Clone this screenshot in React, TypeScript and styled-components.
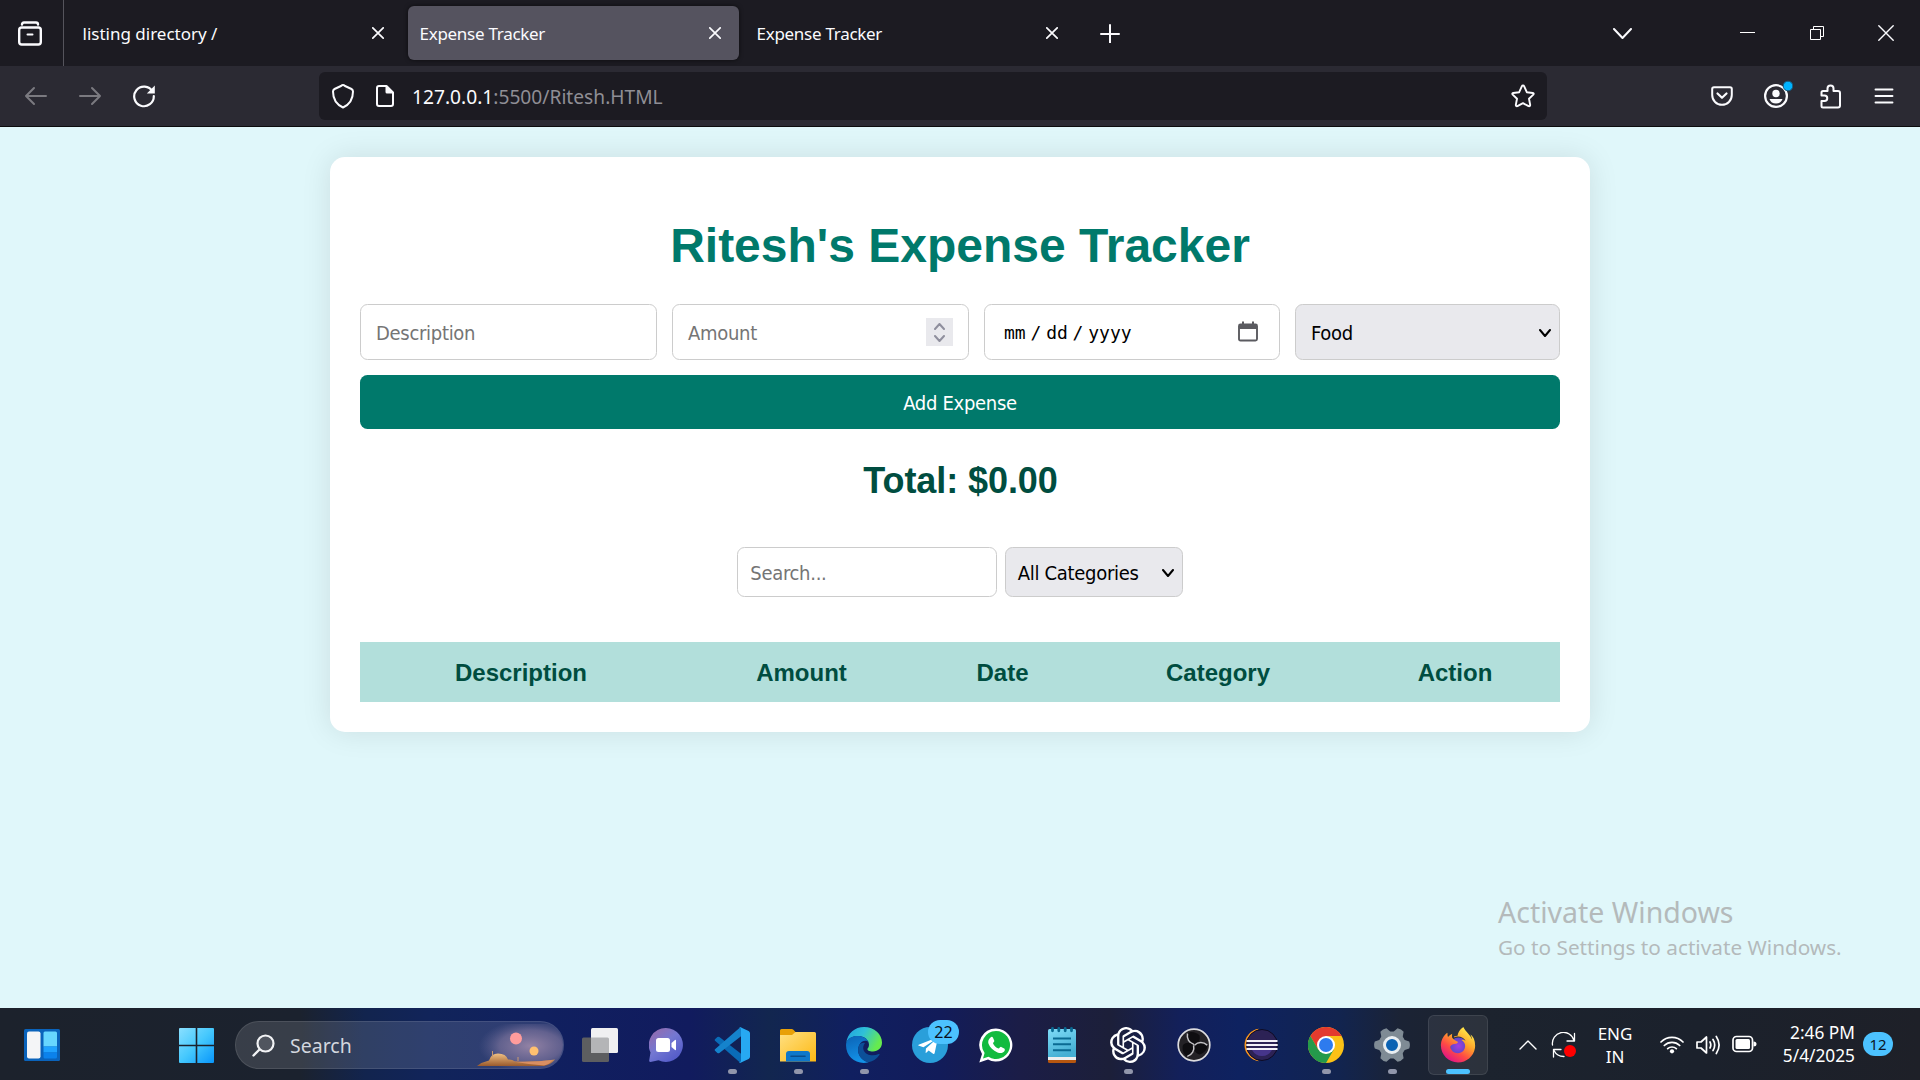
import React from 'react';
import styled, { createGlobalStyle, css } from 'styled-components';
import { SiOpenai } from 'react-icons/si';
import { FaTelegramPlane, FaFirefoxBrowser } from 'react-icons/fa';

const ui = '"Noto Sans", "Open Sans", sans-serif';
const control = '"DejaVu Sans Condensed", "DejaVu Sans", sans-serif';

const Global = createGlobalStyle`
  * { box-sizing: border-box; }
  body { margin: 0; background: #e0f7fa; font-family: "Liberation Sans", Arial, sans-serif; overflow: hidden; }
  svg { display: block; flex: none; }
`;

const Screen = styled.div`
  display: flex;
  flex-direction: column;
  width: 1920px;
  height: 1080px;
  position: relative;
`;

/* ---------- browser chrome ---------- */
const TabBar = styled.header`
  display: flex;
  align-items: center;
  height: 66px;
  background: #1c1b22;
  color: #fbfbfe;
  font-family: ${ui};
`;
const ViewButton = styled.div`
  display: flex;
  align-items: center;
  justify-content: center;
  width: 64px;
  height: 66px;
  padding-right: 4px;
  border-right: 1px solid #55545c;
`;
const Tabs = styled.div`
  display: flex;
  gap: 6px;
  margin-left: 7px;
`;
const Tab = styled.div<{ $active?: boolean }>`
  display: flex;
  align-items: center;
  justify-content: space-between;
  width: 331px;
  height: 54px;
  padding: 0 18px 0 11.5px;
  border-radius: 6px;
  ${p => p.$active && css`
    background: #55535f;
    box-shadow: 0 0 4px rgba(0, 0, 0, 0.6);
  `}
`;
const TabTitle = styled.span<{ $tracking: number }>`
  padding-top: 2px;
  font-size: 17px;
  line-height: 24px;
  letter-spacing: ${p => p.$tracking}px;
  white-space: nowrap;
`;
const NewTab = styled.div`
  margin-left: 24px;
`;
const TabMenu = styled.div`
  margin-left: auto;
  width: 100px;
`;
const WindowButtons = styled.div`
  display: flex;
  width: 207px;
`;
const WindowButton = styled.div`
  display: flex;
  align-items: center;
  justify-content: center;
  width: 69px;
  height: 66px;
`;
const NavBar = styled.nav`
  display: flex;
  align-items: center;
  height: 61px;
  padding: 0 9px;
  background: #2b2a33;
  border-bottom: 1px solid #0c0c0d;
  color: #fbfbfe;
`;
const NavButton = styled.div<{ $disabled?: boolean }>`
  display: flex;
  align-items: center;
  justify-content: center;
  width: 54px;
  height: 60px;
  color: ${p => (p.$disabled ? '#7b7a80' : '#fbfbfe')};
`;
const UrlBar = styled.div`
  display: flex;
  align-items: center;
  width: 1228px;
  height: 48px;
  margin: 0 auto 0 148px;
  padding: 0 12px 0 12px;
  gap: 18px;
  border-radius: 6px;
  background: #1c1b22;
`;
const Url = styled.span`
  flex: 1;
  margin-left: -3px;
  padding-top: 2px;
  font: 19.2px/26px ${ui};
  color: #8f8e95;
  b { font-weight: 400; color: #fbfbfe; }
`;

/* ---------- page ---------- */
const Page = styled.main`
  flex: 1;
  padding-top: 30px;
  background: #e0f7fa;
`;
const Card = styled.section`
  width: 1260px;
  margin: 0 auto;
  padding: 30px;
  display: flow-root;
  border-radius: 15px;
  background: #fff;
  box-shadow: 0 0 30px rgba(0, 0, 0, 0.1);
`;
const Title = styled.h1`
  margin: 31px 0 31px;
  font-size: 48px;
  line-height: 55px;
  text-align: center;
  color: #00796b;
`;
const Form = styled.div`
  display: grid;
  grid-template-columns: 297px 297px 296px 265px;
  gap: 15px;
`;
const field = css`
  border: 1px solid #ccc;
  border-radius: 7.5px;
  font: 20px/24px ${control};
  letter-spacing: -0.3px;
`;
const TextInput = styled.input<{ $compact?: boolean }>`
  ${field}
  width: ${p => (p.$compact ? '260px' : '100%')};
  height: ${p => (p.$compact ? '50px' : '56px')};
  padding: ${p => (p.$compact ? '2px 12px 0' : '1px 15px 0')};
  background: #fff;
  outline: none;
  &::placeholder { color: #757575; opacity: 1; }
`;
const InputBox = styled.div`
  ${field}
  display: flex;
  align-items: center;
  justify-content: space-between;
  height: 56px;
  padding: 0 15px 0 15px;
`;
const Placeholder = styled.span`
  padding-top: 1px;
  color: #757575;
`;
const Spinner = styled.div`
  display: flex;
  flex-direction: column;
  align-items: center;
  justify-content: space-between;
  width: 27px;
  height: 28px;
  padding: 5px 0 4px;
  background: #e9e9ed;
  color: #8f8f9d;
`;
const DateParts = styled.span`
  display: flex;
  gap: 4.8px;
  padding: 1px 0 0 4px;
  font: 18px/24px "DejaVu Sans Mono", monospace;
  letter-spacing: 0;
  color: #000;
`;
const CalendarSlot = styled.span`
  padding: 0 6px 2px 0;
`;
const Select = styled.div<{ $compact?: boolean }>`
  ${field}
  display: flex;
  align-items: center;
  justify-content: space-between;
  width: ${p => (p.$compact ? '178px' : '100%')};
  height: ${p => (p.$compact ? '50px' : '56px')};
  padding: ${p => (p.$compact ? '1px 8px 0 12px' : '1px 8px 0 15px')};
  background: #e9e9ed;
  color: #000;
`;
const AddButton = styled.button`
  grid-column: 1 / -1;
  height: 54px;
  padding: 2px 0 0;
  border: 0;
  border-radius: 7.5px;
  background: #00796b;
  color: #fff;
  font: 20px/24px ${control};
  letter-spacing: -0.3px;
`;
const Total = styled.h2`
  margin: 31px 0 46px;
  padding-left: 1px;
  font-size: 36px;
  line-height: 41px;
  letter-spacing: -0.08px;
  text-align: center;
  color: #004d40;
`;
const Filters = styled.div`
  display: flex;
  justify-content: center;
  gap: 7.5px;
  margin-bottom: 45px;
`;
const HeadRow = styled.div`
  display: grid;
  grid-template-columns: 322px 239px 163px 268px 206px;
  align-items: center;
  height: 60px;
  padding-top: 2px;
  background: #b2dfdb;
`;
const HeadCell = styled.div`
  font-size: 24px;
  font-weight: bold;
  text-align: center;
  color: #004d40;
`;
const Watermark = styled.aside`
  position: absolute;
  left: 1498px;
  top: 892px;
  color: #b4babb;
  font-family: ${ui};
  white-space: nowrap;
`;
const WatermarkTitle = styled.div`
  font-size: 28.5px;
  line-height: 40px;
`;
const WatermarkText = styled.div`
  font-size: 20.75px;
  line-height: 31px;
`;

/* ---------- taskbar ---------- */
const Taskbar = styled.footer`
  display: flex;
  align-items: center;
  height: 72px;
  background: linear-gradient(90deg, #1c222c 0, #1b222e 300px, #12244e 365px, #11245a 430px, #10205f 540px, #111b5e 690px,
    #12264f 770px, #101f60 850px, #121c5a 940px, #1b1d47 1020px, #1c1f39 1110px, #13205a 1180px, #0e2260 1240px,
    #12244f 1340px, #1b2335 1400px, #1c232e 1480px, #1b212c 1700px, #1e2028 1920px);
  color: #fff;
  font-family: ${ui};
`;
const Widgets = styled.div`
  padding-top: 1px;
  margin-left: 24px;
`;
const Start = styled.div`
  padding-top: 2px;
  margin-left: 119px;
`;
const SearchBox = styled.div`
  display: flex;
  align-items: center;
  width: 329px;
  height: 48px;
  margin: 2px 3px 0 21px;
  padding-left: 16px;
  border: 1px solid rgba(255, 255, 255, 0.1);
  border-radius: 24px;
  background: rgba(255, 255, 255, 0.13);
  overflow: hidden;
`;
const SearchText = styled.span`
  flex: 1;
  margin-left: 15px;
  padding-top: 1px;
  font-size: 19.5px;
  line-height: 26px;
  color: #d3d7df;
`;
const Apps = styled.div`
  display: flex;
`;
const AppButton = styled.div`
  position: relative;
  display: flex;
  align-items: center;
  justify-content: center;
  width: 66px;
  height: 72px;
  padding-top: 2px;
`;
const Tile = styled.div`
  display: flex;
  align-items: center;
  justify-content: center;
  width: 60px;
  height: 60px;
  border: 1px solid rgba(255, 255, 255, 0.09);
  border-radius: 6px;
  background: rgba(255, 255, 255, 0.07);
`;
const Indicator = styled.i<{ $current?: boolean }>`
  position: absolute;
  bottom: 6px;
  width: ${p => (p.$current ? 24 : 9)}px;
  height: 5px;
  border-radius: 3px;
  background: ${p => (p.$current ? '#4cc2ff' : '#9196ab')};
`;
const Count = styled.span`
  position: absolute;
  left: 31px;
  top: 12px;
  width: 31px;
  height: 24px;
  border-radius: 12px;
  background: #4cc2ff;
  color: #0a1020;
  font-size: 16px;
  line-height: 24px;
  text-align: center;
`;
const Tray = styled.div`
  display: flex;
  align-items: center;
  flex: 1;
  padding: 2px 27px 0 28px;
`;
const Language = styled.div`
  width: 60px;
  margin-left: 8px;
  font-size: 17px;
  line-height: 23px;
  text-align: center;
`;
const Status = styled.div`
  display: flex;
  gap: 11.5px;
  margin-left: 15px;
`;
const Clock = styled.div`
  margin: 0 0 2px auto;
  font-size: 17.3px;
  line-height: 23px;
  text-align: right;
`;
const Bell = styled.div`
  width: 30px;
  height: 24px;
  margin: 0 0 2px 8px;
  border-radius: 12px;
  background: #4cc2ff;
  color: #0a1626;
  font-size: 15px;
  line-height: 24px;
  text-align: center;
`;
const SyncSlot = styled.div`
  margin-left: 14px;
`;

/* ---------- small drawings ---------- */
const line = { fill: 'none', stroke: 'currentColor', strokeWidth: 2, strokeLinecap: 'round', strokeLinejoin: 'round' } as const;

const Cross = ({ s = 12, w = 1.7 }: { s?: number; w?: number }) => (
  <svg width={s} height={s} viewBox={`0 0 ${s} ${s}`}>
    <path d={`M.8 .8L${s - 0.8} ${s - 0.8}M${s - 0.8} .8L.8 ${s - 0.8}`} {...line} strokeWidth={w} />
  </svg>
);
const Chevron = ({ w, h, up, t = 2 }: { w: number; h: number; up?: boolean; t?: number }) => (
  <svg width={w} height={h} viewBox={`0 0 ${w} ${h}`}>
    <path d={up ? `M1 ${h - 1}L${w / 2} 1L${w - 1} ${h - 1}` : `M1 1L${w / 2} ${h - 1}L${w - 1} 1`} {...line} strokeWidth={t} />
  </svg>
);
const Arrow = ({ back }: { back?: boolean }) => (
  <svg width="24" height="24" viewBox="0 0 24 24">
    <path d={back ? 'M22 12H2M10 4L2 12l8 8' : 'M2 12h20M14 4l8 8-8 8'} {...line} />
  </svg>
);

const VsCode = () => (
  <svg width="36" height="36" viewBox="0 0 36 36">
    <path d="M1 12.2l2.4-2.2q1-.6 2 0L28 27.5V35L26 35.6 1 13.8q-.8-.8 0-1.6z" fill="#0a6cb8" />
    <path d="M1 23.8L3.4 26q1 .6 2 0L28 8.5V1L26 .4 1 22.2q-.8.8 0 1.6z" fill="#1583cc" />
    <path d="M26.5.3L34.6 4Q36 4.800 36 6.200V29.800q0 1.400-1.400 2.200L26.500 35.700q-.8.2-1.500-.5.900.4 2-1V1.800q-.4-1.400-2-1 .7-.7 1.500-.5z" fill="#27a9f2" />
  </svg>
);
const Folder = () => (
  <svg width="36" height="34" viewBox="0 0 36 34">
    <defs><linearGradient id="fold" x2="1" y2="1"><stop stopColor="#ffe083" /><stop offset="1" stopColor="#fdb913" /></linearGradient></defs>
    <path d="M0 2.500Q0 1 1.500 1h10.200q1 0 1.700.8L16 4.500 12 9H0z" fill="#e8a008" />
    <path d="M0 7h12l3.500-3H34.500Q36 4 36 5.500V33.500H0z" fill="url(#fold)" />
    <path d="M6 33.500V26q0-3 3-3H27q3 0 3 3v7.500z" fill="#0f78ca" />
    <path d="M11 28.300h14" stroke="#0a4e8c" strokeWidth="1.600" strokeLinecap="round" />
  </svg>
);
const Edge = () => (
  <svg width="36" height="36" viewBox="0 0 36 36">
    <defs>
      <linearGradient id="eg" x2="1" y2=".4"><stop stopColor="#1f9fe0" /><stop offset=".5" stopColor="#2fc0d8" /><stop offset="1" stopColor="#66eb4e" /></linearGradient>
      <linearGradient id="eb" x2=".3" y2="1"><stop stopColor="#0b62b5" /><stop offset="1" stopColor="#1391e6" /></linearGradient>
    </defs>
    <path d="M.2 16C1.500 6 9 0 18 0c10.500 0 18 7.500 18 15.500 0 5.500-4 9-9 9-4 0-6-1.500-5.500-2.800.3-.7 1.500-1.500 1.500-4C23 13 18.500 9 12 9 6 9 1.500 12 .2 16z" fill="url(#eg)" />
    <path d="M.2 16C1.500 11 6 9 11.500 9c5.500 0 9.500 2.500 11 6-2-1.800-7-2-9.500 3.500C10 26 15 33.500 22.500 35.300 10 38.500-1.500 29 .2 16z" fill="url(#eb)" />
    <path d="M13 18.500c-3 7 1.500 15.500 9.500 16.800 4.500-.8 8.500-3.500 11-7.500.4-.7-.2-1-.8-.7-6 2.700-13 .9-15-3.600-1-2.500-.4-5.500 1.300-7.500-2.500-.5-5 .5-6 2.500z" fill="#0c4f98" />
  </svg>
);
const Chrome = () => (
  <svg width="36" height="36" viewBox="0 0 36 36">
    <circle cx="18" cy="18" r="18" fill="#fbc116" />
    <path d="M2.400 9A18 18 0 0 1 33.600 9H18L10.200 22.500z" fill="#e33b2e" />
    <path d="M2.400 9A18 18 0 0 0 18 36L25.800 22.500 18 27 10.200 22.500z" fill="#249a4b" />
    <circle cx="18" cy="18" r="9" fill="#fff" />
    <circle cx="18" cy="18" r="7" fill="#2d7bee" />
  </svg>
);
const Gear = () => (
  <svg width="36" height="36" viewBox="0 0 36 36">
    <g fill="#7f8b95">
      <circle cx="18" cy="18" r="13.500" />
      {[30, 90, 150, 210, 270, 330].map(a => (
        <path key={a} d="M12 8L14.500 .8Q18-.6 21.500 .8L24 8z" transform={`rotate(${a} 18 18)`} />
      ))}
    </g>
    <circle cx="18" cy="18" r="7.500" fill="#0b62b3" stroke="#e9eef2" strokeWidth="3" />
  </svg>
);
const Obs = () => (
  <svg width="34" height="34" viewBox="0 0 34 34">
    <circle cx="17" cy="17" r="15.800" fill="#242226" stroke="#dcdcdf" strokeWidth="1.700" />
    {[0, 120, 240].map(a => (
      <g key={a} transform={`rotate(${a} 17 17)`}>
        <path d="M11 5c-2.500 6 .5 10.500 6 11.500 5-1.500 6.500-5 5.500-9C20 4.500 14 3 11 5z" fill="#0e0d10" />
        <path d="M10.500 5.500C9.500 10.500 12 15 17 16.500" fill="none" stroke="#c4c3c6" strokeWidth="1.500" />
      </g>
    ))}
  </svg>
);
const Eclipse = () => (
  <svg width="36" height="34" viewBox="0 0 36 34">
    <path d="M17 .8A16.500 16.500 0 0 0 17 33.200 17 17 0 0 1 17 .8z" fill="#f7941e" />
    <path d="M17 .8A16.300 16.300 0 0 0 17 33.200L12 29Q5 24 5 17T12 5z" fill="#f7941e" />
    <circle cx="20" cy="17" r="15.500" fill="#2c2255" stroke="#0d0b24" strokeWidth="1" />
    <path d="M10 22H30Q26.500 28 20 28T10 22z" fill="#46358a" />
    <path d="M4.500 13H35.500M4.300 17H35.700M4.500 21H35.500" stroke="#f2f0f7" strokeWidth="2.200" />
  </svg>
);
const Notepad = () => (
  <svg width="28" height="36" viewBox="0 0 28 36">
    <defs><linearGradient id="np" x2=".4" y2="1"><stop stopColor="#7fdcf8" /><stop offset="1" stopColor="#45afd3" /></linearGradient></defs>
    <path d="M0 31h28v3.500q0 1.500-1.500 1.500h-25Q0 36 0 34.500z" fill="#b6560f" />
    <path d="M0 29h28v4H0z" fill="#eee" />
    <path d="M0 3.500Q0 2 1.500 2h25Q28 2 28 3.500V30H0z" fill="url(#np)" />
    <path d="M5 11.500H23M5 17.300H23M5 23.200H23" stroke="#0a6a92" strokeWidth="1.900" />
    <path d="M4.500 1.500v2.300M10.800 1.500v2.300M17.200 1.500v2.300M23.500 1.500v2.300" stroke="#0a6a92" strokeWidth="2.800" strokeLinecap="round" />
  </svg>
);
const Chat = () => (
  <svg width="34" height="34" viewBox="0 0 34 34">
    <defs><linearGradient id="ch" x1="0" x2=".8" y1="0" y2="1"><stop stopColor="#9a68a5" /><stop offset=".5" stopColor="#7478d2" /><stop offset="1" stopColor="#5058c8" /></linearGradient></defs>
    <path d="M17 0a17 17 0 1 1-7.500 32.300L1.500 34Q0 34 .2 32.500L1.500 24.500A17 17 0 0 1 17 0z" fill="url(#ch)" />
    <rect x="7" y="10" width="14" height="14" rx="2.500" fill="#fff" />
    <path d="M22.500 15l3.500-3q1-.5 1 .6V21.400q0 1.100-1 .6l-3.500-3z" fill="#fff" />
  </svg>
);
const TaskView = () => (
  <svg width="36" height="34" viewBox="0 0 36 34">
    <rect x="0" y="9.500" width="27" height="24.500" rx="1.500" fill="#5d5e60" />
    <rect x="9" y="0" width="27" height="25" rx="1.500" fill="#f0f0f1" />
    <path d="M9 9.500h16.500q1.500 0 1.500 1.500V25H10.500Q9 25 9 23.500z" fill="#b4b5b7" />
  </svg>
);
const Telegram = () => (
  <svg width="36" height="36" viewBox="0 0 36 36">
    <circle cx="18" cy="18" r="18" fill="#2a9fda" />
    <g transform="translate(5 8)"><FaTelegramPlane size={22} color="#fff" /></g>
  </svg>
);
const WhatsApp = () => (
  <svg width="34" height="35" viewBox="0 0 34 35">
    <path d="M17 .5A16.500 16.500 0 1 1 9 31.500L.3 34.500 3 26A16.500 16.500 0 0 1 17 .5z" fill="#fff" />
    <path d="M17 3A14 14 0 1 1 9.500 28.800L4 30.500 5.600 25A14 14 0 0 1 17 3z" fill="#12bb3f" />
    <path d="M11.500 9.500c1-1 2-.8 2.500.2l1.300 3c.3.800-1.500 2-1.300 2.600 1 2.500 3 4.300 5.500 5.300.7.200 1.800-2 2.700-1.700l3 1.500c1 .5.800 2.300-.3 3.300-1.800 1.700-4 1.600-6.400.7-4.500-1.800-7.500-5-9-8.700-.7-2-.2-4.500 2-6.200z" fill="#fff" />
  </svg>
);
const FirefoxMark = styled(FaFirefoxBrowser)`
  fill: url(#ff);
`;
const Firefox = () => (
  <svg width="36" height="36" viewBox="0 0 36 36">
    <defs>
      <linearGradient id="ff" x1=".85" y1=".05" x2=".25" y2=".95"><stop stopColor="#fff44f" /><stop offset=".4" stopColor="#ffa42a" /><stop offset=".7" stopColor="#ff4a45" /><stop offset="1" stopColor="#e01585" /></linearGradient>
      <radialGradient id="fp"><stop stopColor="#a63ce0" /><stop offset="1" stopColor="#5b49c8" /></radialGradient>
    </defs>
    <circle cx="18.500" cy="19" r="8.500" fill="url(#fp)" />
    <FirefoxMark size={36} />
  </svg>
);
const WidgetIcon = () => (
  <svg width="36" height="32" viewBox="0 0 36 32">
    <rect width="36" height="32" rx="1.500" fill="#0a63bb" />
    <rect x="3" y="2.500" width="13.500" height="27" rx="2" fill="#f4f5f7" />
    <path d="M19.500 4q0-1.500 1.500-1.500H31.500q1.500 0 1.500 1.500V17.500H19.500z" fill="#67d6ff" />
    <path d="M19.500 17.500H33V23.500H19.500z" fill="#1fa2ff" />
    <path d="M19.500 23.500H33V28q0 1.500-1.500 1.500H21q-1.500 0-1.500-1.500z" fill="#0b82ec" />
  </svg>
);
const StartIcon = () => (
  <svg width="35" height="35" viewBox="0 0 35 35">
    <defs><linearGradient id="st" gradientUnits="userSpaceOnUse" x1="0" y1="0" x2="35" y2="35"><stop stopColor="#8ae0ff" /><stop offset=".5" stopColor="#45c8fd" /><stop offset="1" stopColor="#0896fb" /></linearGradient></defs>
    <path d="M1 0H16.700V16.700H0V1Q0 0 1 0zM18.300 0H34q1 0 1 1V16.700H18.300zM0 18.300H16.700V35H1q-1 0-1-1zM18.300 18.300H35V34q0 1-1 1H18.300z" fill="url(#st)" />
  </svg>
);
const DesertArt = () => (
  <svg width="86" height="46" viewBox="0 0 86 46">
    <defs>
      <radialGradient id="sky" cx=".62" cy=".5" r=".6"><stop stopColor="#a58fae" stopOpacity=".85" /><stop offset=".6" stopColor="#8d7fa5" stopOpacity=".55" /><stop offset="1" stopColor="#6a6a98" stopOpacity="0" /></radialGradient>
      <linearGradient id="sand" y2="1" x2="0"><stop stopColor="#f0c083" /><stop offset="1" stopColor="#9a5a2c" /></linearGradient>
    </defs>
    <rect x="0" y="2" width="86" height="44" fill="url(#sky)" />
    <circle cx="39" cy="16.500" r="6" fill="#ff9c9c" />
    <circle cx="57" cy="29" r="4.500" fill="#ffc070" />
    <path d="M0 44q5-4 12-5.500 2-7 9-7 8 0 10 6 4-.5 7 2 20 .8 40-2-4 5-11 6.500z" fill="url(#sand)" />
    <path d="M15.500 29v6M41 35v4" stroke="#c99a70" strokeWidth="1" />
    <path d="M36 39.500q20 1 40-1.500-4 4.500-9 5.500-15-1-31-4z" fill="#d98e62" />
  </svg>
);

const apps: { icon: React.ReactNode; open?: boolean; current?: boolean; count?: string }[] = [
  { icon: <TaskView /> },
  { icon: <Chat /> },
  { icon: <VsCode />, open: true },
  { icon: <Folder />, open: true },
  { icon: <Edge />, open: true },
  { icon: <Telegram />, count: '22' },
  { icon: <WhatsApp /> },
  { icon: <Notepad /> },
  { icon: <SiOpenai size={36} />, open: true },
  { icon: <Obs /> },
  { icon: <Eclipse /> },
  { icon: <Chrome />, open: true },
  { icon: <Gear />, open: true },
  { icon: <Firefox />, open: true, current: true },
];

const tabs = [
  { title: 'listing directory /', tracking: 0 },
  { title: 'Expense Tracker', tracking: -0.28, active: true },
  { title: 'Expense Tracker', tracking: -0.28 },
];

export default function App() {
  return (
    <Screen>
      <Global />
      <TabBar>
        <ViewButton>
          <svg width="24" height="25" viewBox="0 0 24 25">
            <path d="M4 3.500Q4 1.500 6 1.500H18q2 0 2 2" {...line} strokeWidth={2.400} />
            <rect x="1.200" y="6.500" width="21.600" height="17" rx="2.500" {...line} strokeWidth={2.400} />
            <path d="M9.500 13.500h5" {...line} />
          </svg>
        </ViewButton>
        <Tabs>
          {tabs.map((t, i) => (
            <Tab key={i} $active={t.active}>
              <TabTitle $tracking={t.tracking}>{t.title}</TabTitle>
              <Cross />
            </Tab>
          ))}
        </Tabs>
        <NewTab>
          <svg width="20" height="20" viewBox="0 0 20 20"><path d="M1 11H19M10 2v18" {...line} /></svg>
        </NewTab>
        <TabMenu><Chevron w={19} h={11} /></TabMenu>
        <WindowButtons>
          <WindowButton><svg width="16" height="2" viewBox="0 0 16 2"><path d="M0 0H15V1H0z" fill="#fff" /></svg></WindowButton>
          <WindowButton>
            <svg width="14" height="14" viewBox="0 0 14 14">
              <path d="M.5 3.500H10.500V13.500H.5zM3.500 3.500V.5H13.500V10.500H10.500" fill="none" stroke="#fff" />
            </svg>
          </WindowButton>
          <WindowButton><Cross s={16} w={1.400} /></WindowButton>
        </WindowButtons>
      </TabBar>
      <NavBar>
        <NavButton $disabled><Arrow back /></NavButton>
        <NavButton $disabled><Arrow /></NavButton>
        <NavButton>
          <svg width="24" height="24" viewBox="0 0 24 24">
            <path d="M20.500 7.500A9.800 9.800 0 1 0 21.800 12" {...line} strokeWidth={2.200} />
            <path d="M22.800 1.500V9.500H14.800z" fill="currentColor" />
          </svg>
        </NavButton>
        <UrlBar>
          <svg width="24" height="26" viewBox="0 0 24 26">
            <path d="M12 2Q13 2 14 3L20.500 6q1.500.8 1.500 2.500C22 16 18.500 21.500 12 24.500 5.500 21.500 2 16 2 8.500 2 6.800 3.500 6 3.500 6L10 3Q11 2 12 2z" {...line} />
          </svg>
          <svg width="24" height="24" viewBox="0 0 24 24">
            <path d="M13.500 2H6Q4 2 4 4V20q0 2 2 2H18q2 0 2-2V8.500z" {...line} />
            <path d="M12.500 1.500V8Q12.500 9.500 14 9.500h6.500z" fill="currentColor" />
          </svg>
          <Url><b>127.0.0.1</b>:5500/Ritesh.HTML</Url>
          <svg width="24" height="24" viewBox="0 0 24 24">
            <path d="M12 1.500q.8 0 1.200.9L15.800 8.200l6 .8q1.500.4.500 1.600L18 14.800l1.200 6.200q0 1.600-1.600 1.200L12 19.200 6.400 22.200q-1.600.4-1.600-1.200L6 14.800 1.700 10.600Q.7 9.400 2.200 9l6-.8L10.800 2.400q.4-.9 1.200-.9z" {...line} strokeWidth={1.900} />
          </svg>
        </UrlBar>
        <NavButton>
          <svg width="22" height="20" viewBox="0 0 22 20">
            <path d="M3 1.200H19q1.800 0 1.800 1.800V9A9.800 9.800 0 0 1 1.200 9V3q0-1.800 1.800-1.800z" {...line} />
            <path d="M6.500 7.500L11 11.800 15.500 7.500" {...line} strokeWidth={2.200} />
          </svg>
        </NavButton>
        <NavButton>
          <svg width="34" height="34" viewBox="0 0 34 34">
            <circle cx="17" cy="17" r="10.900" {...line} strokeWidth={2.200} />
            <circle cx="17" cy="14.500" r="3.700" fill="currentColor" />
            <path d="M10.500 20h13q-1.500 4.500-6.500 4.500T10.500 20z" fill="currentColor" />
            <circle cx="29" cy="7" r="4.800" fill="#00b3ff" stroke="#155b7f" strokeWidth="1" />
          </svg>
        </NavButton>
        <NavButton>
          <svg width="24" height="25" viewBox="-2 0 24 25">
            <path d="M3 7H7.500V4.500a3 3 0 0 1 6 0V7H18q2 0 2 2V21.500q0 2-2 2H3q-1.500 0-1.500-1.500V17H4.500a2.700 2.700 0 0 0 0-5.500H1.500V8.500Q1.500 7 3 7z" {...line} />
          </svg>
        </NavButton>
        <NavButton>
          <svg width="20" height="16" viewBox="0 0 20 16"><path d="M1.500 1.500h17M1.500 8h17M1.500 14.500h17" {...line} strokeWidth={1.900} /></svg>
        </NavButton>
      </NavBar>

      <Page>
        <Card>
          <Title>Ritesh's Expense Tracker</Title>
          <Form>
            <TextInput placeholder="Description" />
            <InputBox>
              <Placeholder>Amount</Placeholder>
              <Spinner><Chevron w={11} h={7} up /><Chevron w={11} h={7} /></Spinner>
            </InputBox>
            <InputBox>
              <DateParts><span>mm</span><span>/</span><span>dd</span><span>/</span><span>yyyy</span></DateParts>
              <CalendarSlot>
                <svg width="20" height="21" viewBox="0 0 20 21">
                  <path d="M2.500 3.500h15q1.500 0 1.500 1.500v13q0 1.500-1.500 1.500h-15Q1 19.500 1 18V5Q1 3.500 2.500 3.500z" fill="none" stroke="#5b5b60" strokeWidth="1.900" />
                  <path d="M1 3.500H19V8H1zM4 .5h2V4H4zM14 .5h2V4h-2z" fill="#5b5b60" />
                </svg>
              </CalendarSlot>
            </InputBox>
            <Select><span>Food</span><Chevron w={12} h={8} /></Select>
            <AddButton>Add Expense</AddButton>
          </Form>
          <Total>Total: $0.00</Total>
          <Filters>
            <TextInput $compact placeholder="Search..." />
            <Select $compact><span>All Categories</span><Chevron w={12} h={8} /></Select>
          </Filters>
          <HeadRow>
            {['Description', 'Amount', 'Date', 'Category', 'Action'].map(h => <HeadCell key={h}>{h}</HeadCell>)}
          </HeadRow>
        </Card>
      </Page>

      <Watermark>
        <WatermarkTitle>Activate Windows</WatermarkTitle>
        <WatermarkText>Go to Settings to activate Windows.</WatermarkText>
      </Watermark>

      <Taskbar>
        <Widgets><WidgetIcon /></Widgets>
        <Start><StartIcon /></Start>
        <SearchBox>
          <svg width="23" height="23" viewBox="0 0 23 23">
            <circle cx="13.500" cy="9.500" r="8" fill="rgba(255,255,255,.12)" stroke="#f2f3f5" strokeWidth="2.200" />
            <path d="M7.500 15.500L1.500 21.500" stroke="#f2f3f5" strokeWidth="2.400" strokeLinecap="round" />
          </svg>
          <SearchText>Search</SearchText>
          <DesertArt />
        </SearchBox>
        <Apps>
          {apps.map((a, i) => (
            <AppButton key={i}>
              {a.current ? <Tile>{a.icon}</Tile> : a.icon}
              {a.count && <Count>{a.count}</Count>}
              {a.open && <Indicator $current={a.current} />}
            </AppButton>
          ))}
        </Apps>
        <Tray>
          <Chevron w={18} h={10} up t={1.400} />
          <SyncSlot>
            <svg width="26" height="26" viewBox="0 0 26 26">
              <path d="M1.500 13A11 11 0 0 1 23 8.500M23.500 1.500v7.500h-7.500M13 24.500A11 11 0 0 1 3 18.500M2.500 25V17.500h7.500" {...line} strokeWidth={1.300} />
              <circle cx="19" cy="19" r="6" fill="#f00" />
            </svg>
          </SyncSlot>
          <Language>ENG<br />IN</Language>
          <Status>
            <svg width="24" height="19" viewBox="0 0 24 19">
              <path d="M1 7A15.500 15.500 0 0 1 23 7M4.300 10.500a11 11 0 0 1 15.400 0M7.700 13.700a6.300 6.300 0 0 1 8.600 0" {...line} strokeWidth={1.700} />
              <circle cx="12" cy="16.300" r="2.100" fill="currentColor" />
            </svg>
            <svg width="25" height="20" viewBox="0 0 25 20">
              <path d="M1 7H5L10.500 2V18L5 13H1zM14 7q1.600 3 0 6M17 4.500q3.400 5.500 0 11M20.300 1.500q5.600 8.500 0 17" {...line} strokeWidth={1.700} />
            </svg>
            <svg width="25" height="18" viewBox="0 0 25 18">
              <rect x="1" y="1.500" width="19.500" height="15" rx="3.500" {...line} strokeWidth={1.700} />
              <rect x="3.500" y="4" width="14.500" height="10" rx="1.500" fill="currentColor" />
              <path d="M21.500 6.500q3 0 3 2.500t-3 2.500z" fill="currentColor" />
            </svg>
          </Status>
          <Clock>2:46 PM<br />5/4/2025</Clock>
          <Bell>12</Bell>
        </Tray>
      </Taskbar>
    </Screen>
  );
}
